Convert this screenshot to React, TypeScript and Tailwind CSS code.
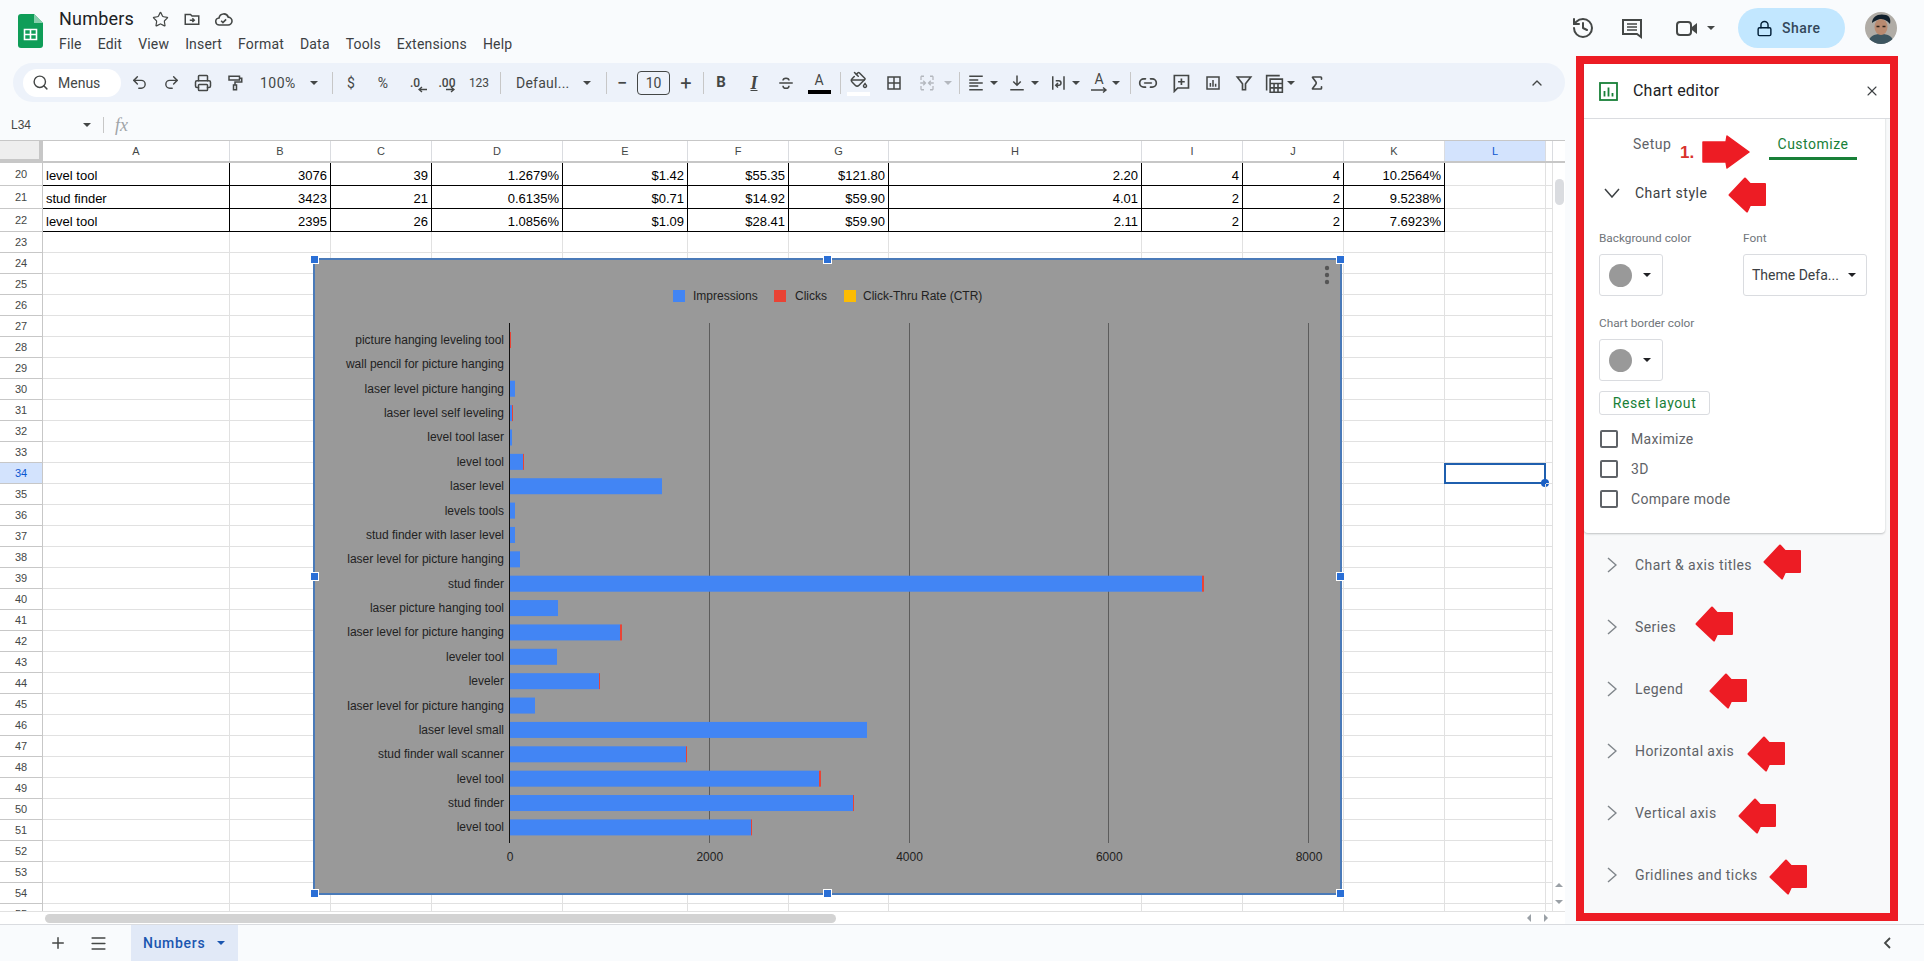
import { History, Link2, Lock, PaintBucket, Printer, Redo2, Search, Sigma, Star, Undo2, ChevronUp, Plus, Menu, X } from 'lucide-react';

const columns = ['A', 'B', 'C', 'D', 'E', 'F', 'G', 'H', 'I', 'J', 'K', 'L', ''];

const dataRows: Record<number, string[]> = {
  20: ['level tool', '3076', '39', '1.2679%', '$1.42', '$55.35', '$121.80', '2.20', '4', '4', '10.2564%'],
  21: ['stud finder', '3423', '21', '0.6135%', '$0.71', '$14.92', '$59.90', '4.01', '2', '2', '9.5238%'],
  22: ['level tool', '2395', '26', '1.0856%', '$1.09', '$28.41', '$59.90', '2.11', '2', '2', '7.6923%'],
};

const rowNumbers = Array.from({ length: 36 }, (_, i) => i + 20);

const chartRows: [string, number, number][] = [
  ['picture hanging leveling tool', 0, 1],
  ['wall pencil for picture hanging', 0, 0],
  ['laser level picture hanging', 5, 0],
  ['laser level self leveling', 2, 1],
  ['level tool laser', 2, 0],
  ['level tool', 13, 1],
  ['laser level', 152, 0],
  ['levels tools', 5, 0],
  ['stud finder with laser level', 5, 0],
  ['laser level for picture hanging', 10, 0],
  ['stud finder', 692, 2],
  ['laser picture hanging tool', 48, 0],
  ['laser level for picture hanging', 110, 2],
  ['leveler tool', 47, 0],
  ['leveler', 89, 1],
  ['laser level for picture hanging', 25, 0],
  ['laser level small', 357, 0],
  ['stud finder wall scanner', 176, 1],
  ['level tool', 309, 2],
  ['stud finder', 343, 1],
  ['level tool', 241, 1],
];

const ticks = [0, 2000, 4000, 6000, 8000];

function Caret({ className = '' }: { className?: string }) {
  return <div className={`h-0 w-0 shrink-0 border-x-4 border-t-4 border-x-transparent border-t-[#444746] ${className}`} />;
}

function Sep({ className = '' }: { className?: string }) {
  return <div className={`h-[22px] w-px shrink-0 bg-[#c7c7c7] ${className}`} />;
}

function Slot({ children, className = '' }: { children: React.ReactNode; className?: string }) {
  return <div className={`flex h-6 w-8 shrink-0 items-center justify-center text-[#444746] ${className}`}>{children}</div>;
}

function Ico({ children, size = 18 }: { children: React.ReactNode; size?: number }) {
  return (
    <svg width={size} height={size} viewBox="0 0 24 24" fill="none" stroke="currentColor" strokeWidth="2">
      {children}
    </svg>
  );
}

function LeftArrow({ className }: { className: string }) {
  return (
    <svg className={`absolute ${className}`} width="38" height="36" viewBox="0 0 38 36">
      <path d="M1.5 18 17 1.5 22 7h15v21H22l-3 6.5z" fill="#ed1c24" stroke="#ed1c24" strokeWidth="2" strokeLinejoin="round" />
    </svg>
  );
}

function SectionRow({ label }: { label: string }) {
  return (
    <div className="flex h-[62px] items-center pl-[23px] pt-[2px] text-[#5f6368]">
      <svg width="10" height="16" viewBox="0 0 10 16" fill="none" stroke="#80868b" strokeWidth="1.5">
        <path d="M1 1l8 7-8 7" />
      </svg>
      <span className="ml-[18px] text-sm tracking-[0.42px]">{label}</span>
    </div>
  );
}

function ColorButton() {
  return (
    <div className="flex h-[42px] w-16 items-center rounded-[3px] border border-[#dadce0] pl-[9px]">
      <div className="h-[23px] w-[23px] rounded-full bg-[#999999]" />
      <Caret className="ml-[11px] !border-t-[#202124]" />
    </div>
  );
}

function CheckRow({ label }: { label: string }) {
  return (
    <div className="flex h-[18px] items-center">
      <div className="ml-px h-[18px] w-[18px] rounded-[2px] border-2 border-[#5f6368]" />
      <span className="ml-[13px] text-sm tracking-[0.3px] text-[#5f6368]">{label}</span>
    </div>
  );
}

function ChartEditor() {
  return (
    <div className="relative box-border h-[865px] w-[322px] shrink-0 border-8 border-[#ed1c24] bg-[#f8f9fa]">
      <div className="mr-[5px] rounded-b-[4px] bg-white shadow-[0_1px_2px_rgba(60,64,67,0.3)]">
        <div className="-mr-[5px] flex h-[55px] items-center border-b border-[#dadce0] bg-white pl-[15px] pr-[10px]">
          <svg width="19" height="19" viewBox="0 0 19 19" fill="none">
            <rect x="1" y="1" width="17" height="17" stroke="#188038" strokeWidth="1.8" />
            <path d="M5.5 9v5.5M9.5 5.5v9M13.5 11v3.5" stroke="#188038" strokeWidth="1.8" />
          </svg>
          <span className="ml-[15px] text-base tracking-[0.2px] text-[#202124]">Chart editor</span>
          <X size={16} strokeWidth={1.6} className="ml-auto text-[#3c4043]" />
        </div>
        <div className="flex h-[46px] items-start pl-[49px] pt-[16px] text-sm tracking-[0.5px]">
          <span className="w-[136px] leading-[18px] text-[#5f6368]">Setup</span>
          <div className="h-[25px] w-[88px] border-b-[3px] border-[#188038] text-center leading-[18px] text-[#188038]">Customize</div>
        </div>
        <div className="flex h-14 items-center pl-5">
          <svg width="16" height="10" viewBox="0 0 16 10" fill="none" stroke="#3c4043" strokeWidth="1.5">
            <path d="M1 1l7 8 7-8" />
          </svg>
          <span className="ml-[15px] text-sm tracking-[0.5px] text-[#3c4043]">Chart style</span>
        </div>
        <div className="flex flex-col pb-[25px] pl-[15px] pt-[10px]">
          <div className="flex">
            <div className="w-36">
              <div className="h-[14px] text-[11.8px] leading-[14px] text-[#70757a]">Background color</div>
              <div className="mt-[9px]">
                <ColorButton />
              </div>
            </div>
            <div>
              <div className="h-[14px] text-[11.8px] leading-[14px] text-[#70757a]">Font</div>
              <div className="mt-[9px] flex h-[42px] w-[124px] items-center rounded-[3px] border border-[#dadce0] pl-[8px] text-sm text-[#3c4043]">
                <span>Theme Defa...</span>
                <Caret className="ml-auto mr-[10px] !border-t-[#202124]" />
              </div>
            </div>
          </div>
          <div className="mt-5 h-[14px] text-[11.8px] leading-[14px] text-[#70757a]">Chart border color</div>
          <div className="mt-[9px]">
            <ColorButton />
          </div>
          <div className="mt-[10px] flex h-6 w-[111px] items-center justify-center rounded-[3px] border border-[#dadce0] text-sm tracking-[0.6px] text-[#188038]">
            Reset layout
          </div>
          <div className="mt-[15px] flex flex-col gap-3">
            <CheckRow label="Maximize" />
            <CheckRow label="3D" />
            <CheckRow label="Compare mode" />
          </div>
        </div>
      </div>
      <SectionRow label="Chart & axis titles" />
      <SectionRow label="Series" />
      <SectionRow label="Legend" />
      <SectionRow label="Horizontal axis" />
      <SectionRow label="Vertical axis" />
      <SectionRow label="Gridlines and ticks" />

      <span className="absolute left-[96px] top-[76px] font-['Liberation_Sans',sans-serif] text-[17px] font-bold text-[#d9322c]">1.</span>
      <svg className="absolute left-[118px] top-[71px]" width="48" height="34" viewBox="0 0 48 34">
        <path d="M1 7h23l1-6 22 16-22 16-1-6H1z" fill="#ed1c24" stroke="#ed1c24" strokeWidth="1.5" strokeLinejoin="round" />
      </svg>
      <LeftArrow className="left-[144px] top-[113px]" />
      <LeftArrow className="left-[179px] top-[480px]" />
      <LeftArrow className="left-[111px] top-[542px]" />
      <LeftArrow className="left-[125px] top-[609px]" />
      <LeftArrow className="left-[163px] top-[672px]" />
      <LeftArrow className="left-[154px] top-[734px]" />
      <LeftArrow className="left-[185px] top-[795px]" />
    </div>
  );
}

function TopBar() {
  return (
    <div className="flex h-14 shrink-0 items-start">
      <svg className="ml-[18px] mt-[14px]" width="25" height="34" viewBox="0 0 25 34">
        <path d="M3 0h13l9 9v22a3 3 0 0 1-3 3H3a3 3 0 0 1-3-3V3a3 3 0 0 1 3-3z" fill="#0f9d58" />
        <path d="M16 0l9 9h-9z" fill="#87ceac" />
        <path d="M6.5 15.5h12v10h-12zM12.5 15.5v10M6.5 20.5h12" fill="none" stroke="#fff" strokeWidth="1.6" />
      </svg>
      <div className="ml-4 mt-2">
        <div className="flex h-[22px] items-center text-[#444746]">
          <span className="w-[75px] text-lg leading-[22px] tracking-[0.2px] text-[#202124]">Numbers</span>
          <Star size={17} strokeWidth={1.7} className="ml-[18px]" />
          <svg className="ml-[14px]" width="18" height="18" viewBox="0 0 24 24" fill="none" stroke="currentColor" strokeWidth="2">
            <path d="M3 6h7l2 2h9v11H3z" />
            <path d="M9 13.5h6M12.5 11l2.5 2.5-2.5 2.5" />
          </svg>
          <svg className="ml-[13px]" width="19" height="19" viewBox="0 0 24 24" fill="none" stroke="currentColor" strokeWidth="2">
            <path d="M7 19a4.5 4.5 0 0 1-.6-9A6 6 0 0 1 18 9a5 5 0 0 1-.5 10z" />
            <path d="M9 13.5l2.3 2.3 4-4" />
          </svg>
        </div>
        <div className="mt-1 flex h-5 items-center gap-4 text-sm leading-5 tracking-[0.18px] text-[#3c4043]">
          <span>File</span>
          <span>Edit</span>
          <span>View</span>
          <span>Insert</span>
          <span>Format</span>
          <span>Data</span>
          <span>Tools</span>
          <span>Extensions</span>
          <span>Help</span>
        </div>
      </div>
      <div className="ml-auto mr-[27px] flex h-14 items-center text-[#444746]">
        <History size={24} strokeWidth={2} />
        <svg className="ml-[25px]" width="24" height="24" viewBox="0 0 24 24" fill="none" stroke="currentColor" strokeWidth="2">
          <path d="M3 4h18v17l-4-3H3z" />
          <path d="M7 8h10M7 11h10M7 14h10" strokeWidth="1.6" />
        </svg>
        <svg className="ml-[31px]" width="24" height="24" viewBox="0 0 24 24" fill="none">
          <rect x="2" y="6" width="14" height="13" rx="3" stroke="currentColor" strokeWidth="2" />
          <path d="M15 12.5l7-5.5v11z" fill="currentColor" />
        </svg>
        <Caret className="ml-2" />
        <div className="ml-[23px] flex h-10 w-[107px] items-center rounded-full bg-[#c2e7ff] pl-[18px] text-sm font-medium tracking-[0.5px]">
          <Lock size={17} strokeWidth={2} className="text-[#001d35]" />
          <span className="ml-[9px] text-[#33475b]">Share</span>
        </div>
        <svg className="ml-5" width="32" height="32" viewBox="0 0 32 32">
          <defs>
            <clipPath id="avatarClip">
              <circle cx="16" cy="16" r="16" />
            </clipPath>
          </defs>
          <g clipPath="url(#avatarClip)">
            <rect width="32" height="32" fill="#b0aca6" />
            <path d="M3 32c1-8 6-10 13-10s12 2 13 10z" fill="#3d5560" />
            <ellipse cx="16" cy="15" rx="6.5" ry="8" fill="#b98a70" />
            <path d="M7 11C7 4 14 1 21 3c4 1 5 5 4 9-3-4-7-5-10-5-3 1-6 2-8 4z" fill="#12202c" />
            <path d="M11.5 14.5h3M17.5 14.5h3" stroke="#2a2018" strokeWidth="1.3" />
          </g>
        </svg>
      </div>
    </div>
  );
}

function Toolbar() {
  return (
    <div className="ml-[13px] flex h-[39px] w-[1552px] shrink-0 items-center rounded-full bg-[#edf2fa] text-[#444746]">
      <div className="ml-[10px] flex h-7 w-[98px] items-center rounded-full bg-white pl-[9px] text-sm">
        <Search size={17} strokeWidth={2} />
        <span className="ml-[9px]">Menus</span>
      </div>
      <Slot className="ml-[2px]"><Undo2 size={17} strokeWidth={2} /></Slot>
      <Slot><Redo2 size={17} strokeWidth={2} /></Slot>
      <Slot><Printer size={18} strokeWidth={2} /></Slot>
      <Slot>
        <Ico>
          <path d="M4 3h14v5H4zM18 5.5h3v5h-9v4M10 14.5h4v6.5h-4z" />
        </Ico>
      </Slot>
      <span className="ml-[9px] w-[37px] text-sm tracking-[0.5px]">100%</span>
      <Caret className="ml-[13px]" />
      <Sep className="ml-[14px]" />
      <Slot className="ml-[2px] text-sm">$</Slot>
      <Slot className="text-sm">%</Slot>
      <Slot>
        <div className="relative text-xs font-medium">
          .0
          <svg className="absolute -right-[7px] top-[11px]" width="9" height="7" viewBox="0 0 9 7" fill="none" stroke="currentColor" strokeWidth="1.4">
            <path d="M9 3.5H1M4 1L1 3.5 4 6" />
          </svg>
        </div>
      </Slot>
      <Slot>
        <div className="relative text-xs font-medium">
          .00
          <svg className="absolute right-0 top-[11px]" width="9" height="7" viewBox="0 0 9 7" fill="none" stroke="currentColor" strokeWidth="1.4">
            <path d="M0 3.5h8M5 1l3 2.5L5 6" />
          </svg>
        </div>
      </Slot>
      <Slot className="text-[12px]">123</Slot>
      <Sep className="ml-[5px]" />
      <span className="ml-[15px] w-[53px] whitespace-nowrap text-sm tracking-[0.25px]">Defaul...</span>
      <Caret className="ml-[14px]" />
      <Sep className="ml-[15px]" />
      <Slot className="ml-[3px] !w-6 text-lg font-medium">−</Slot>
      <div className="ml-[3px] flex h-6 w-[33px] items-center justify-center rounded-[4px] border border-[#444746] text-sm">10</div>
      <Slot className="ml-[4px] !w-6 text-xl">+</Slot>
      <Sep className="ml-[5px]" />
      <Slot className="ml-px text-[15px] font-bold">B</Slot>
      <Slot className="ml-px font-['Liberation_Serif',serif] text-lg font-bold italic underline">I</Slot>
      <Slot>
        <Ico>
          <path d="M3 12h18M8 8.5a4 3 0 0 1 8 0M16 15.5a4 3.5 0 0 1-8 0" />
        </Ico>
      </Slot>
      <div className="ml-px flex h-6 w-8 shrink-0 flex-col items-center">
        <span className="h-[19px] text-sm leading-[19px]">A</span>
        <div className="h-1 w-[23px] bg-black" />
      </div>
      <Sep className="ml-[5px]" />
      <Slot className="relative ml-[2px]">
        <PaintBucket size={18} strokeWidth={2} className="-mt-[5px]" />
        <div className="absolute left-1 top-[21px] h-[4px] w-[23px] bg-white" />
      </Slot>
      <Slot className="ml-[3px]">
        <Ico>
          <path d="M4 4h16v16H4zM12 4v16M4 12h16" />
        </Ico>
      </Slot>
      <Slot className="ml-px text-[#b4b8be]">
        <Ico>
          <path d="M4 3v5M4 16v5M20 3v5M20 16v5M4 3h4M16 3h4M4 21h4M16 21h4M3 12h7M7 9l3 3-3 3M21 12h-7M17 9l-3 3 3 3" strokeWidth="1.7" />
        </Ico>
      </Slot>
      <Caret className="ml-px !border-t-[#b4b8be]" />
      <Sep className="ml-[7px]" />
      <div className="ml-[7px] h-[18px] w-[18px] shrink-0">
        <Ico>
          <path d="M3 3h18M3 8h12M3 12h18M3 16h12M3 21h18" />
        </Ico>
      </div>
      <Caret className="ml-[5px]" />
      <div className="ml-[10px] h-[18px] w-[18px] shrink-0">
        <Ico>
          <path d="M12 2v13M7 10l5 5 5-5M3 21h18" />
        </Ico>
      </div>
      <Caret className="ml-[5px]" />
      <div className="ml-[10px] h-[18px] w-[18px] shrink-0">
        <Ico>
          <path d="M5 3v18M20 3v18M9 9h4a3 3 0 0 1 0 6h-3M12 12l-3 3 3 3" />
        </Ico>
      </div>
      <Caret className="ml-[5px]" />
      <div className="relative ml-[10px] flex h-6 w-[18px] shrink-0 flex-col items-center">
        <span className="h-[16px] text-sm leading-[16px]">A</span>
        <svg width="18" height="7" viewBox="0 0 18 7" fill="none" stroke="currentColor" strokeWidth="1.4">
          <path d="M1 3h15M13 .5L16 3l-3 2.5" />
        </svg>
      </div>
      <Caret className="ml-[4px]" />
      <Sep className="ml-[10px]" />
      <Slot className="ml-px"><Link2 size={20} strokeWidth={2} /></Slot>
      <Slot className="ml-px">
        <svg width="20" height="20" viewBox="0 0 24 24" fill="none" stroke="currentColor" strokeWidth="2">
          <path d="M4 3h17v15H8l-4 4zM12.5 6.5v8M8.5 10.5h8" />
        </svg>
      </Slot>
      <Slot>
        <Ico>
          <path d="M4 4h16v16H4zM8.5 12v5M12 8v9M15.5 13v4" />
        </Ico>
      </Slot>
      <Slot className="-ml-px">
        <svg width="18" height="18" viewBox="0 0 24 24" fill="none" stroke="currentColor" strokeWidth="2.2">
          <path d="M3 4h18l-7 9v8h-4v-8z" />
        </svg>
      </Slot>
      <div className="ml-[4px] h-5 w-5 shrink-0">
        <svg width="21" height="21" viewBox="0 0 24 24" fill="none" stroke="currentColor" strokeWidth="1.8">
          <path d="M3 20V3h15M7 7h14v15H7zM7 12h14M11.5 12v10M16 12v10M7 17h14" />
        </svg>
      </div>
      <Caret className="ml-[3px]" />
      <Slot className="ml-[6px]"><Sigma size={18} strokeWidth={2.2} /></Slot>
      <ChevronUp size={16} strokeWidth={2} className="ml-auto mr-[20px]" />
    </div>
  );
}

function FormulaBar() {
  return (
    <div className="flex h-[38px] shrink-0 items-center pt-2 text-[#444746]">
      <span className="ml-[11px] w-[72px] font-['Liberation_Sans',sans-serif] text-xs">L34</span>
      <Caret />
      <div className="ml-3 h-4 w-px bg-[#c7c7c7]" />
      <span className="ml-[11px] font-['Liberation_Serif',serif] text-lg italic text-[#a0a4a8]">fx</span>
    </div>
  );
}

function Chart() {
  return (
    <div className="absolute left-[313px] top-[118px] box-border h-[637px] w-[1029px] border-2 border-[#4a7ab8] bg-[#999999]">
      <svg className="font-['Liberation_Sans',sans-serif]" width="1025" height="633" viewBox="315 260 1025 633">
        <rect x="673" y="290" width="12" height="12" fill="#4285f4" />
        <text x="693" y="300" fontSize="12" fill="#222">Impressions</text>
        <rect x="774" y="290" width="12" height="12" fill="#ea4335" />
        <text x="795" y="300" fontSize="12" fill="#222">Clicks</text>
        <rect x="844" y="290" width="12" height="12" fill="#fbbc04" />
        <text x="863" y="300" fontSize="12" fill="#222">Click-Thru Rate (CTR)</text>
        <circle cx="1327" cy="268" r="2.2" fill="#555" />
        <circle cx="1327" cy="275" r="2.2" fill="#555" />
        <circle cx="1327" cy="282" r="2.2" fill="#555" />
        {ticks.slice(1).map((t, i) => {
          const x = Math.round(509 + (i + 1) * 199.75) + 0.5;
          return <line key={t} x1={x} x2={x} y1="323" y2="843" stroke="#5c5c5c" strokeWidth="1" />;
        })}
        {chartRows.map(([label, blue, red], i) => {
          const cy = 340 + i * 24.37;
          return (
            <g key={i}>
              <text x="504" y={cy + 4} textAnchor="end" fontSize="12" fill="#222">{label}</text>
              <rect x="510" y={cy - 8} width={blue} height="16" fill="#4285f4" />
              <rect x={510 + blue} y={cy - 8} width={red} height="16" fill="#ea4335" />
            </g>
          );
        })}
        <line x1="509.5" x2="509.5" y1="323" y2="843" stroke="#111" strokeWidth="1" />
        {ticks.map((t, i) => (
          <text key={t} x={510 + i * 199.75} y="861" textAnchor="middle" fontSize="12" fill="#222">{t}</text>
        ))}
      </svg>
      <div className="absolute -left-[5px] -top-[5px] h-[9px] w-[9px] border border-white bg-[#2a6fd6]" />
      <div className="absolute -top-[5px] left-[508px] h-[9px] w-[9px] border border-white bg-[#2a6fd6]" />
      <div className="absolute -right-[5px] -top-[5px] h-[9px] w-[9px] border border-white bg-[#2a6fd6]" />
      <div className="absolute -left-[5px] top-[312px] h-[9px] w-[9px] border border-white bg-[#2a6fd6]" />
      <div className="absolute -right-[5px] top-[312px] h-[9px] w-[9px] border border-white bg-[#2a6fd6]" />
      <div className="absolute -bottom-[5px] -left-[5px] h-[9px] w-[9px] border border-white bg-[#2a6fd6]" />
      <div className="absolute -bottom-[5px] left-[508px] h-[9px] w-[9px] border border-white bg-[#2a6fd6]" />
      <div className="absolute -bottom-[5px] -right-[5px] h-[9px] w-[9px] border border-white bg-[#2a6fd6]" />
    </div>
  );
}

function Sheet() {
  const gridCols = 'grid grid-cols-[43px_187px_101px_101px_131px_125px_101px_100px_253px_101px_101px_101px_101px_7px]';
  return (
    <div className="relative flex min-h-0 w-[1565px] flex-1 flex-col bg-white font-['Liberation_Sans',sans-serif]">
      <div className="flex h-[23px] shrink-0 border-t border-b-2 border-[#c7c7c7]">
        <div className={`${gridCols} w-[1553px]`}>
          <div className="border-b-2 border-r-4 border-[#c7c7c7] bg-[#eeeeee]" />
          {columns.map((c, i) => (
            <div key={i} className={`flex items-center justify-center border-r border-[#dadce0] text-[11px] ${c === 'L' ? 'bg-[#d3e3fd] font-medium text-[#0b57d0]' : 'text-[#444746]'}`}>
              {c}
            </div>
          ))}
        </div>
      </div>
      <div className="flex min-h-0 flex-1">
        <div className="relative min-h-0 w-[1553px] overflow-hidden">
          {rowNumbers.map((n) => {
            const row = dataRows[n];
            return (
              <div key={n} className={`${gridCols} ${row ? 'h-[23px]' : 'h-[21px]'}`}>
                <div className={`flex items-center justify-center border-b border-r border-[#c7c7c7] text-[11px] ${n === 34 ? 'bg-[#d3e3fd] font-medium text-[#0b57d0]' : 'text-[#444746]'}`}>
                  {n}
                </div>
                {columns.map((c, i) => {
                  const value = row && row[i];
                  if (value) {
                    return (
                      <div key={c} className={`flex items-center overflow-hidden whitespace-nowrap border-b border-r border-black px-[3px] pt-[3px] text-[13px] text-black ${i === 0 ? 'justify-start' : 'justify-end'}`}>
                        {value}
                      </div>
                    );
                  }
                  return (
                    <div key={i} className="relative border-b border-r border-[#e1e1e1]">
                      {n === 34 && c === 'L' && (
                        <div className="absolute -bottom-px -left-px -right-px top-0 border-2 border-[#1f5fae]">
                          <div className="absolute -bottom-[5px] -right-[5px] h-2 w-2 rounded-full bg-[#1a5fc4]" />
                        </div>
                      )}
                    </div>
                  );
                })}
              </div>
            );
          })}
        </div>
        <div className="flex w-3 flex-col items-center">
          <div className="mt-4 h-[26px] w-[9px] rounded-full bg-[#dadce0]" />
          <div className="mt-auto flex h-[34px] flex-col items-center justify-around pb-px">
            <div className="h-0 w-0 border-x-4 border-b-4 border-x-transparent border-b-[#9aa0a6]" />
            <Caret className="!border-t-[#9aa0a6]" />
          </div>
        </div>
      </div>
      <div className="flex h-[13px] shrink-0 items-center border-t border-[#e1e1e1] bg-white">
        <div className="ml-[45px] h-[9px] w-[791px] rounded-full bg-[#d3d3d3]" />
        <div className="ml-auto mr-[17px] flex w-[21px] items-center justify-between">
          <div className="h-0 w-0 border-y-4 border-r-4 border-y-transparent border-r-[#9aa0a6]" />
          <div className="h-0 w-0 border-y-4 border-l-4 border-y-transparent border-l-[#9aa0a6]" />
        </div>
      </div>
      <Chart />
    </div>
  );
}

function BottomBar() {
  return (
    <div className="flex h-9 shrink-0 items-center text-[#444746]">
      <Plus size={18} strokeWidth={2} className="ml-[49px]" />
      <Menu size={19} strokeWidth={2} className="ml-[22px]" />
      <div className="ml-[23px] flex h-9 w-[107px] items-center bg-[#e1e9f7] pl-3 text-sm font-medium tracking-[0.7px] text-[#1a56b0]">
        <span>Numbers</span>
        <Caret className="ml-3 !border-t-[#1a56b0]" />
      </div>
      <svg className="ml-auto mr-[33px]" width="8" height="12" viewBox="0 0 8 12" fill="none" stroke="#444746" strokeWidth="1.8">
        <path d="M7 1L2 6l5 5" />
      </svg>
    </div>
  );
}

export default function App() {
  return (
    <div className="flex h-[961px] w-[1924px] flex-col overflow-hidden bg-[#f9fbfd] font-['Roboto',sans-serif]">
      <TopBar />
      <div className="box-border flex h-[869px] shrink-0 border-b border-[#dadce0]">
        <div className="flex w-[1576px] shrink-0 flex-col pt-[7px]">
          <Toolbar />
          <FormulaBar />
          <Sheet />
        </div>
        <ChartEditor />
      </div>
      <BottomBar />
    </div>
  );
}
